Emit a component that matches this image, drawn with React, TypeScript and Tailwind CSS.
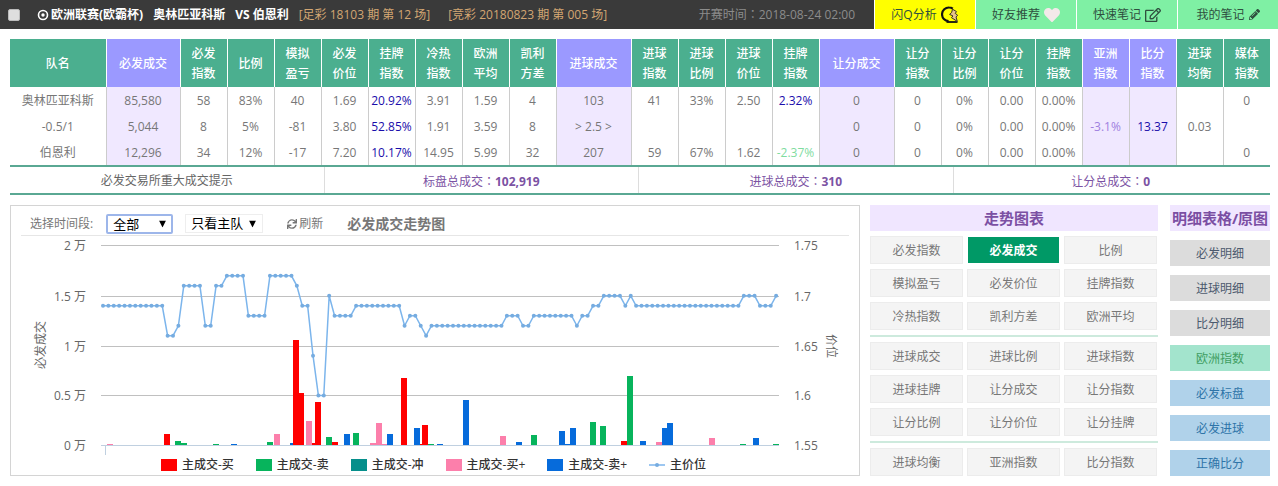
import { ReactNode, useState } from "react";
import clsx from "clsx";
import { FaHeart, FaPencilAlt, FaRegEdit, FaSync } from "react-icons/fa";

type Column = { label: string; width?: string; highlight?: boolean; values: string[] };

const columns: Column[] = [
  { label: "必发成交", width: "w-[74px]", highlight: true, values: ["85,580", "5,044", "12,296"] },
  { label: "必发指数", values: ["58", "8", "34"] },
  { label: "比例", values: ["83%", "5%", "12%"] },
  { label: "模拟盈亏", values: ["40", "-81", "-17"] },
  { label: "必发价位", values: ["1.69", "3.80", "7.20"] },
  { label: "挂牌指数", values: ["20.92%", "52.85%", "10.17%"] },
  { label: "冷热指数", values: ["3.91", "1.91", "14.95"] },
  { label: "欧洲平均", values: ["1.59", "3.59", "5.99"] },
  { label: "凯利方差", values: ["4", "8", "32"] },
  { label: "进球成交", width: "w-[75px]", highlight: true, values: ["103", "> 2.5 >", "207"] },
  { label: "进球指数", values: ["41", "", "59"] },
  { label: "进球比例", values: ["33%", "", "67%"] },
  { label: "进球价位", values: ["2.50", "", "1.62"] },
  { label: "挂牌指数", values: ["2.32%", "", "-2.37%"] },
  { label: "让分成交", width: "w-[75px]", highlight: true, values: ["0", "0", "0"] },
  { label: "让分指数", values: ["0", "0", "0"] },
  { label: "让分比例", values: ["0%", "0%", "0%"] },
  { label: "让分价位", values: ["0.00", "0.00", "0.00"] },
  { label: "挂牌指数", values: ["0.00%", "0.00%", "0.00%"] },
  { label: "亚洲指数", highlight: true, values: ["", "-3.1%", ""] },
  { label: "比分指数", highlight: true, values: ["", "13.37", ""] },
  { label: "进球均衡", values: ["", "0.03", ""] },
  { label: "媒体指数", values: ["0", "", "0"] },
];

const teams = ["奥林匹亚科斯", "-0.5/1", "伯恩利"];

const valueColors: Record<string, string> = {
  "20.92%": "text-[#1a0dab]",
  "52.85%": "text-[#1a0dab]",
  "10.17%": "text-[#1a0dab]",
  "2.32%": "text-[#1a0dab]",
  "13.37": "text-[#1a0dab]",
  "-2.37%": "text-[#7fdc9f]",
  "-3.1%": "text-[#9f80e0]",
};

const totals = [
  { label: "标盘总成交", value: "102,919" },
  { label: "进球总成交", value: "310" },
  { label: "让分总成交", value: "0" },
];

const chartGroups = [
  ["必发指数", "必发成交", "比例", "模拟盈亏", "必发价位", "挂牌指数", "冷热指数", "凯利方差", "欧洲平均"],
  ["进球成交", "进球比例", "进球指数", "进球挂牌", "让分成交", "让分指数", "让分比例", "让分价位", "让分挂牌"],
  ["进球均衡", "亚洲指数", "比分指数"],
];

const detailLinks = [
  { label: "必发明细", style: "bg-[#dcdcdc] text-[#4c5a6e]" },
  { label: "进球明细", style: "bg-[#dcdcdc] text-[#4c5a6e]" },
  { label: "比分明细", style: "bg-[#dcdcdc] text-[#4c5a6e]" },
  { label: "欧洲指数", style: "bg-[#a3e4cd] text-[#3f9e62]" },
  { label: "必发标盘", style: "bg-[#b0d2ea] text-[#2e74a8]" },
  { label: "必发进球", style: "bg-[#b0d2ea] text-[#2e74a8]" },
  { label: "正确比分", style: "bg-[#b0d2ea] text-[#2e74a8]" },
];

const RED = "#ff0000";
const GREEN = "#07b45c";
const PINK = "#fc7fab";
const BLUE = "#066bdb";

const legend = [
  { label: "主成交-买", style: "bg-[#ff0000]" },
  { label: "主成交-卖", style: "bg-[#07b45c]" },
  { label: "主成交-冲", style: "bg-[#068f8b]" },
  { label: "主成交-买+", style: "bg-[#fc7fab]" },
  { label: "主成交-卖+", style: "bg-[#066bdb]" },
];

// [price, number of samples in a row]
const priceRuns: [number, number][] = [
  [1.69, 12], [1.66, 2], [1.67, 1], [1.71, 4], [1.67, 2], [1.71, 2], [1.72, 4],
  [1.68, 4], [1.72, 5], [1.71, 1], [1.69, 2], [1.64, 1], [1.6, 2], [1.7, 1],
  [1.68, 4], [1.69, 9], [1.67, 1], [1.68, 2], [1.67, 1], [1.66, 1], [1.67, 14],
  [1.68, 3], [1.67, 2], [1.68, 8], [1.67, 1], [1.68, 2], [1.69, 2], [1.7, 4],
  [1.69, 1], [1.7, 1], [1.69, 20], [1.7, 3], [1.69, 3], [1.7, 1],
];

// [x, height, color]
const bars: [number, number, string][] = [
  [96, 1, PINK], [153, 11, RED], [164, 4, GREEN], [170, 2, GREEN], [202, 1, GREEN],
  [220, 1, BLUE], [256, 3, GREEN], [263, 11, PINK], [279, 2, BLUE], [282, 105, RED],
  [287, 52, RED], [295, 24, PINK], [301, 2, RED], [304, 43, RED], [321, 3, RED],
  [315, 8, GREEN], [333, 11, BLUE], [342, 12, GREEN], [359, 2, PINK], [371, 1, PINK],
  [365, 22, PINK], [376, 11, BLUE], [390, 67, RED], [408, 1, RED], [403, 17, BLUE],
  [411, 20, RED], [417, 1, GREEN], [426, 1, BLUE], [452, 45, BLUE], [489, 9, PINK],
  [505, 3, BLUE], [520, 10, GREEN], [548, 14, BLUE], [554, 1, BLUE], [559, 17, BLUE],
  [579, 23, GREEN], [589, 19, GREEN], [610, 4, RED], [616, 69, GREEN], [629, 4, BLUE],
  [645, 3, PINK], [651, 17, BLUE], [656, 22, BLUE], [698, 7, PINK], [729, 1, GREEN],
  [742, 7, BLUE], [762, 1, GREEN],
];

const gridLines = [
  { y: 9, left: "2 万", right: "1.75" },
  { y: 60, left: "1.5 万", right: "1.7" },
  { y: 110, left: "1 万", right: "1.65" },
  { y: 159, left: "0.5 万", right: "1.6" },
  { y: 209, left: "0 万", right: "1.55" },
];

const points = priceRuns
  .flatMap(([price, count]) => Array<number>(count).fill(price))
  .map((price, i) => ({ x: 92 + i * 5.385, y: 209.5 - (price - 1.55) * 998 }));

// the SC face sets the full-width colon to the left, the TC face centres it
function Colon() {
  return <span className="font-['Noto_Sans_CJK_TC',sans-serif]">：</span>;
}

function FlashIcon() {
  return (
    <svg viewBox="0 0 18 18" className="size-[18px]" fill="none">
      <path d="M11.8 2.6C10.6 1.8 9.4 1.500 8.200 1.500A6.800 6.800 0 0 0 7.600 15.200" stroke="#111" strokeWidth="2.200" />
      <path d="M5.500 16H16.500" stroke="#111" strokeWidth="1.800" />
      <path
        d="M11.5 3.2L15.500 5.600L14.200 7.400L16.600 9.200L15 11L16.300 15.400L10.400 11.600L12 10L8.600 8.400L10.600 6.600Z"
        fill="#e8c48c"
        stroke="#3a3320"
        strokeWidth="1"
      />
    </svg>
  );
}

function TopLink({ children, active }: { children: ReactNode; active?: boolean }) {
  return (
    <a
      href="#"
      className={clsx(
        "flex w-[101px] items-center justify-center gap-1 border-l border-white text-[#2f4f3f]",
        active ? "bg-[#ffff00]" : "bg-[#7ff0a4]"
      )}
    >
      {children}
    </a>
  );
}

function TopBar() {
  return (
    <header className="flex h-[29px] items-stretch bg-[#3a3a3a]">
      <div className="flex flex-1 items-center pl-2 whitespace-pre">
        <input
          type="checkbox"
          aria-label="选择比赛"
          className="mr-[17px] size-3 appearance-none rounded-xs border border-[#bbb] bg-[#dedede] checked:bg-blue-500"
        />
        <svg viewBox="0 0 12 12" className="mr-[2px] size-3">
          <circle cx="6" cy="6" r="4.500" fill="none" stroke="#fff" strokeWidth="1.600" />
          <circle cx="6" cy="6" r="1.700" fill="#fff" />
        </svg>
        <h1 className="flex gap-[10px] font-bold text-white">
          <span>欧洲联赛(欧霸杯)</span>
          <span>奥林匹亚科斯</span>
          <span>VS 伯恩利</span>
        </h1>
        <span className="ml-[10px] text-[#d3a673]">[足彩 18103 期 第 12 场]</span>
        <span className="ml-[18px] text-[#d3a673]">[竞彩 20180823 期 第 005 场]</span>
        <span className="mr-[19px] ml-auto text-[#8c8c8c]">
          开赛时间
          <Colon />
          2018-08-24 02:00
        </span>
      </div>
      <nav className="flex">
        <TopLink active>
          闪Q分析 <FlashIcon />
        </TopLink>
        <TopLink>
          好友推荐 <FaHeart size={16} color="#f3e9ea" />
        </TopLink>
        <TopLink>
          快速笔记 <FaRegEdit size={16} />
        </TopLink>
        <TopLink>
          我的笔记 <FaPencilAlt size={11} />
        </TopLink>
      </nav>
    </header>
  );
}

function OddsTable() {
  return (
    <table className="w-full table-fixed border-collapse text-center leading-5">
      <colgroup>
        <col />
        {columns.map((col, i) => (
          <col key={i} className={col.width ?? "w-[47px]"} />
        ))}
      </colgroup>
      <thead>
        <tr className="h-12 text-white">
          <th className="bg-[#4baf8f] pt-[2px] font-medium">队名</th>
          {columns.map((col, i) => (
            <th
              key={i}
              className={clsx(
                "border-l border-white pt-[2px] font-medium",
                !col.width && "px-[10px]",
                col.highlight ? "bg-[#9b99ff]" : "bg-[#4baf8f]"
              )}
            >
              {col.label}
            </th>
          ))}
        </tr>
      </thead>
      <tbody>
        {teams.map((team, row) => (
          <tr key={team} className="h-[26px]">
            <td className="pt-[2px]">{team}</td>
            {columns.map((col, i) => (
              <td
                key={i}
                className={clsx(
                  "border-l border-[#ccc] pt-[2px]",
                  col.highlight && "bg-[#f0e8ff]",
                  valueColors[col.values[row]]
                )}
              >
                {col.values[row]}
              </td>
            ))}
          </tr>
        ))}
      </tbody>
    </table>
  );
}

function TotalsRow() {
  return (
    <div className="grid h-[30px] grid-cols-4 border-y-2 border-[#5aa893] pr-[2px] text-center leading-7">
      <div className="h-[26px] border-r border-[#ddd] text-[#666]">必发交易所重大成交提示</div>
      {totals.map((total) => (
        <div key={total.label} className="h-[26px] border-r border-[#ddd] text-[#7b52a3] last:border-r-0">
          {total.label}
          <Colon />
          <b>{total.value}</b>
        </div>
      ))}
    </div>
  );
}

function Select({ id, options, className }: { id: string; options: string[]; className: string }) {
  return (
    <div className="relative">
      <select
        id={id}
        aria-label={options[0]}
        className={clsx("block appearance-none bg-white pl-[5px] text-[13px] text-black outline-none", className)}
      >
        {options.map((option) => (
          <option key={option}>{option}</option>
        ))}
      </select>
      <svg viewBox="0 0 7 7" className="pointer-events-none absolute top-1/2 right-[7px] size-[7px] -translate-y-1/2">
        <path d="M0 0h7L3.500 7z" />
      </svg>
    </div>
  );
}

function TrendChart() {
  return (
    <svg viewBox="0 0 848 220" className="block w-full text-[12px]" fill="#666">
      {gridLines.map((line) => (
        <g key={line.y}>
          <path d={`M90 ${line.y + 0.5}H768`} stroke={line.y === 209 ? "#c0d0e0" : "#c0c0c0"} />
          <text x="75" y={line.y + 5} textAnchor="end">
            {line.left}
          </text>
          <text x="783" y={line.y + 5}>
            {line.right}
          </text>
        </g>
      ))}
      <path d="M94.500 209V219" stroke="#c0d0e0" />
      <text transform="translate(34 109) rotate(-90)" textAnchor="middle">
        必发成交
      </text>
      <text transform="translate(816 110) rotate(90)" textAnchor="middle">
        价位
      </text>
      {bars.map(([x, height, color], i) => (
        <rect key={i} x={x} y={209 - height} width="6" height={height} fill={color} />
      ))}
      <polyline
        points={points.map((p) => `${p.x},${p.y}`).join(" ")}
        fill="none"
        stroke="#7cb5ec"
        strokeWidth="1.500"
      />
      {points.map((p, i) => (
        <circle key={i} cx={p.x} cy={p.y} r="2" fill="#76ace0" />
      ))}
    </svg>
  );
}

function ChartPanel() {
  return (
    <section className="min-w-0 flex-1 border border-[#d4d4d4] pb-[2px]">
      <div className="mr-[10px] ml-[10px] flex h-[30px] items-center border-b border-[#e6e6e6] pt-[6px] pl-[9px]">
        <label htmlFor="period" className="mr-[13px]">
          选择时间段:
        </label>
        <Select
          id="period"
          options={["全部", "最近24小时"]}
          className="h-5 w-[67px] rounded-xs border-2 border-[#9db6ea]"
        />
        <div className="ml-3">
          <Select id="team" options={["只看主队", "只看客队"]} className="h-[19px] w-[78px] border border-[#eee]" />
        </div>
        <button className="ml-6 flex items-center gap-[2px]">
          <FaSync size={10} /> 刷新
        </button>
        <h2 className="ml-6 text-sm font-bold">必发成交走势图</h2>
      </div>
      <TrendChart />
      <ul className="flex justify-center gap-[22px] pt-px pr-[3px] leading-4 font-medium text-[#333]">
        {legend.map((item) => (
          <li key={item.label} className="flex items-center gap-[5px]">
            <span className={clsx("h-3 w-4", item.style)} />
            {item.label}
          </li>
        ))}
        <li className="flex items-center gap-[5px]">
          <svg viewBox="0 0 16 6" className="h-[6px] w-4">
            <path d="M0 3H16" stroke="#7cb5ec" strokeWidth="1.500" />
            <circle cx="8" cy="3" r="2" fill="#76ace0" />
          </svg>
          主价位
        </li>
      </ul>
    </section>
  );
}

function ChartMenu() {
  const [active, setActive] = useState("必发成交");

  return (
    <section className="w-72">
      <h2 className="mb-[5px] h-[26px] bg-[#f0e6ff] text-center text-[15px] leading-[26px] font-bold text-[#7b4fa3]">
        走势图表
      </h2>
      <div className="divide-y-2 divide-[#cdeadd]">
        {chartGroups.map((group, i) => (
          <div key={i} className="grid grid-cols-3 gap-x-1 gap-y-[5px] pt-[5px] pr-px pb-[5px] first:pt-0 last:pb-0">
            {group.map((name) => (
              <button
                key={name}
                onClick={() => setActive(name)}
                className={clsx(
                  "h-7 border pt-[2px]",
                  name === active
                    ? "border-white bg-[#009966] font-bold text-white"
                    : "border-[#ececec] bg-[#f4f4f4] text-[#777]"
                )}
              >
                {name}
              </button>
            ))}
          </div>
        ))}
      </div>
    </section>
  );
}

function DetailMenu() {
  return (
    <section className="ml-[2px] flex w-[100px] flex-col gap-[9px]">
      <h2 className="h-[26px] bg-[#f0e6ff] text-center text-[15px] leading-[26px] font-bold whitespace-nowrap text-[#7b4fa3]">
        明细表格/原图
      </h2>
      {detailLinks.map((link) => (
        <a key={link.label} href="#" className={clsx("block h-[26px] text-center leading-7", link.style)}>
          {link.label}
        </a>
      ))}
    </section>
  );
}

export default function App() {
  return (
    <div className="bg-white font-['Open_Sans','Noto_Sans_CJK_SC',sans-serif] text-xs text-[#777]">
      <TopBar />
      <main className="pt-[10px] pr-2 pl-[10px]">
        <OddsTable />
        <TotalsRow />
        <div className="mt-[10px] flex items-start gap-[10px]">
          <ChartPanel />
          <ChartMenu />
          <DetailMenu />
        </div>
      </main>
    </div>
  );
}
